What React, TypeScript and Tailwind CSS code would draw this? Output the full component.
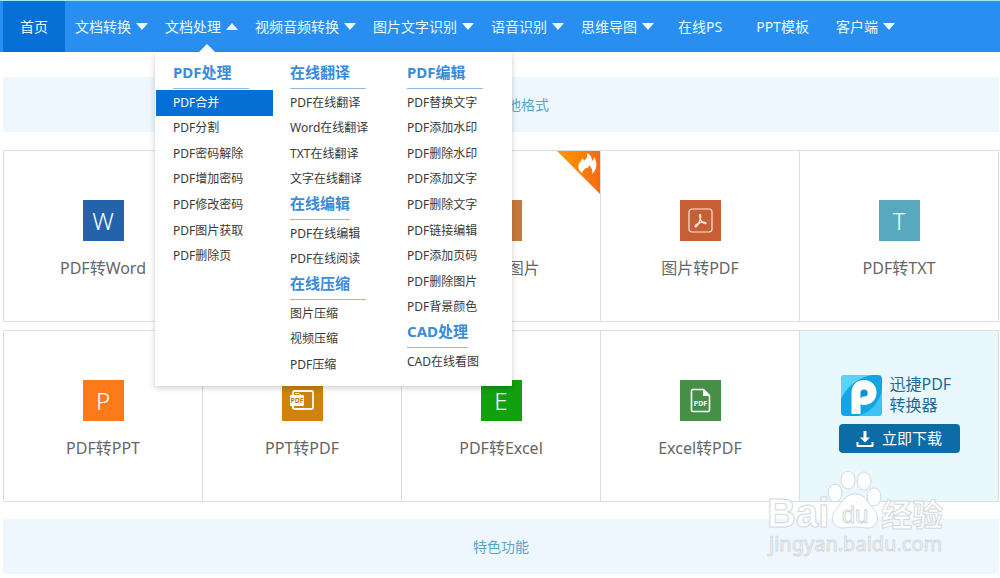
import React from "react";
import clsx from "clsx";

const menuColumns = [
  [
    {
      title: "PDF处理",
      line: "w-[76px]",
      height: "h-[179px]",
      items: ["PDF合并", "PDF分割", "PDF密码解除", "PDF增加密码", "PDF修改密码", "PDF图片获取", "PDF删除页"],
    },
  ],
  [
    {
      title: "在线翻译",
      line: "w-[76px]",
      height: "h-[102px]",
      items: ["PDF在线翻译", "Word在线翻译", "TXT在线翻译", "文字在线翻译"],
    },
    {
      title: "在线编辑",
      line: "w-fit",
      height: "h-[51px]",
      items: ["PDF在线编辑", "PDF在线阅读"],
    },
    {
      title: "在线压缩",
      line: "w-[76px]",
      height: "h-[77px]",
      items: ["图片压缩", "视频压缩", "PDF压缩"],
    },
  ],
  [
    {
      title: "PDF编辑",
      line: "w-[76px]",
      height: "h-[230px]",
      items: [
        "PDF替换文字",
        "PDF添加水印",
        "PDF删除水印",
        "PDF添加文字",
        "PDF删除文字",
        "PDF链接编辑",
        "PDF添加页码",
        "PDF删除图片",
        "PDF背景颜色",
      ],
    },
    {
      title: "CAD处理",
      line: "w-fit",
      height: "h-[26px]",
      items: ["CAD在线看图"],
    },
  ],
];

function Caret({ up = false }: { up?: boolean }) {
  return (
    <svg width="12" height="7" viewBox="0 0 12 7" className={clsx("shrink-0", up && "rotate-180")} aria-hidden="true">
      <path d="M0 0h12L6 7z" fill="#f2fcff" />
    </svg>
  );
}

function NavItem({ label, open = false, children }: { label: string; open?: boolean; children?: React.ReactNode }) {
  return (
    <li className="relative">
      <button
        type="button"
        aria-expanded={open}
        className="flex h-[51px] cursor-pointer items-center gap-[5px] pr-[7px] pl-[10px] whitespace-nowrap"
      >
        {label}
        <Caret up={open} />
      </button>
      {children}
    </li>
  );
}

function NavLink({ label }: { label: string }) {
  return (
    <li>
      <a href="#" className="flex h-[51px] items-center px-[17px] whitespace-nowrap">
        {label}
      </a>
    </li>
  );
}

function MegaMenu() {
  return (
    <div className="absolute top-full left-0 z-10 text-[#3a3a3a]">
      <svg width="16" height="8" viewBox="0 0 16 8" className="absolute -top-2 left-11" aria-hidden="true">
        <path d="M8 0l8 8H0z" fill="#fff" />
      </svg>
      <div className="flex w-[357px] bg-white pt-[9px] pb-2 pl-px text-[12px] shadow-[0_2px_6px_rgba(0,0,0,0.2)]">
        {menuColumns.map((sections, col) => (
          <div key={col} className="w-[117px]">
            {sections.map((section) => (
              <div key={section.title}>
                <h3
                  className={clsx(
                    "mb-px ml-[17px] h-7 border-b border-[#8fbbe0] text-[15px] leading-[22px] font-bold text-[#3a8bd8]",
                    section.line
                  )}
                >
                  {section.title}
                </h3>
                <ul className={clsx("grid auto-rows-fr", section.height)}>
                  {section.items.map((item) => (
                    <li key={item} className="min-h-0">
                      <a
                        href="#"
                        className={clsx(
                          "flex h-full items-center pl-[17px] leading-4",
                          item === "PDF合并" && "bg-[#046fd5] text-white"
                        )}
                      >
                        {item}
                      </a>
                    </li>
                  ))}
                </ul>
              </div>
            ))}
          </div>
        ))}
      </div>
    </div>
  );
}

function Band({ children }: { children: React.ReactNode }) {
  return (
    <h2 className="flex h-[55px] items-center justify-center bg-[#eff7fe] text-[14px] text-[#5aa5c8]">{children}</h2>
  );
}

function Card({ label, color, children, hot }: { label: string; color: string; children: React.ReactNode; hot?: boolean }) {
  return (
    <a
      href="#"
      className="relative flex h-[170px] flex-col items-center gap-[15px] border-r border-[#dcdfe0] pt-[49px] text-[16px] leading-6 text-[#666]"
    >
      <span className={clsx("flex size-[41px] items-center justify-center text-[24px] font-light text-white", color)}>
        {children}
      </span>
      {label}
      {hot && <HotCorner />}
    </a>
  );
}

function HotCorner() {
  return (
    <svg width="43" height="43" viewBox="0 0 43 43" className="absolute top-0 right-0" aria-hidden="true">
      <defs>
        <linearGradient id="hot" x1="0" y1="0" x2="1" y2="0">
          <stop offset="0" stopColor="#ff9c00" />
          <stop offset="1" stopColor="#f56a12" />
        </linearGradient>
      </defs>
      <path d="M0 0h43v43z" fill="url(#hot)" />
      <path
        d="M25 22c-4-3-5-7-2-11 1-1 2-2 2-4 1 1 2 2 2 3 2-2 4-4 3-8 4 2 5 5 5 8 1-1 2-2 2-4 4 6 3 13-2 17 1-3 0-6-3-9 0 2-1 3-2 3-2 0-4 2-5 5z"
        fill="#fff"
      />
    </svg>
  );
}

function AcrobatIcon() {
  return (
    <svg width="25" height="25" viewBox="0 0 25 25" fill="none" stroke="#fbe6dc" aria-hidden="true">
      <rect x="1" y="1" width="23" height="23" rx="3" strokeWidth="1.2" />
      <path
        d="M12 6.500c.8 0 .8 2.500.3 4.500-.8 3-3.300 8-4.800 8-1.500-.8 1.500-3.500 4.500-4.300 2.500-.8 6-.8 6 .5s-4-.4-5.300-3.200C11.800 10 11.200 6.500 12 6.500z"
        strokeWidth="1.400"
      />
    </svg>
  );
}

function PptPdfIcon() {
  return (
    <svg width="25" height="23" viewBox="0 0 25 23" aria-hidden="true">
      <rect x="3" y="2" width="20" height="18" rx="1.500" fill="none" stroke="#fff" strokeWidth="1.800" />
      <path d="M5 4.500h4l1.500 1.500" fill="none" stroke="#fff" />
      <rect x="0" y="6" width="14" height="11" rx="1" fill="#fff" />
      <text x="7" y="14" fontSize="7" fontWeight="600" textAnchor="middle" fill="#b06c05">
        PDF
      </text>
    </svg>
  );
}

function PdfFileIcon() {
  return (
    <svg width="21" height="25" viewBox="0 0 21 25" aria-hidden="true">
      <path
        d="M3 1.500h10.500l6 6V22a1.500 1.500 0 0 1-1.500 1.500H3A1.500 1.500 0 0 1 1.500 22V3A1.500 1.500 0 0 1 3 1.500z"
        fill="none"
        stroke="#fff"
        strokeWidth="1.600"
        strokeLinejoin="round"
      />
      <path d="M13 1.500l6.500 6.500H13z" fill="#fff" />
      <text x="10.500" y="18" fontSize="7" fontWeight="700" textAnchor="middle" fill="#fff">
        PDF
      </text>
    </svg>
  );
}

function AppLogo() {
  return (
    <svg width="41" height="41" viewBox="0 0 41 41" aria-hidden="true">
      <rect width="41" height="41" rx="4" fill="#12a4e4" />
      <path d="M4 0h27C17 3 7 10 0 24V4a4 4 0 0 1 4-4z" fill="#5cd3f8" />
      <path d="M41 15v22a4 4 0 0 1-4 4H17c13-4 21-13 24-26z" fill="#3dc4f3" />
      <path
        d="M10.500 39V17.500C10.500 9.500 16 5 23 5s12.500 5 12.500 12.500S30 30 23 30c-1.500 0-2.500-.3-3.500-.8V39z"
        fill="#fff"
      />
      <path d="M19.500 23.500V18a3.600 3.600 0 1 1 3.600 3.600c-1.600 0-2.600.5-3.600 1.900z" fill="#0b90d0" />
    </svg>
  );
}

function DownloadIcon() {
  return (
    <svg width="18" height="18" viewBox="0 0 18 18" aria-hidden="true">
      <path d="M7.500 1h3v6.500h3.500L9 12.500 4 7.500h3.500z" fill="#fff" />
      <path d="M1.500 12v4h15v-4" fill="none" stroke="#fff" strokeWidth="2" strokeLinejoin="round" />
    </svg>
  );
}

function DownloadCard() {
  return (
    <div className="flex h-[170px] flex-col items-center gap-2 border-r border-[#dcdfe0] bg-[#e8f8fd] pt-[43px]">
      <div className="flex w-[121px] items-center gap-2 pl-0.5 text-[16px] leading-[21px] whitespace-nowrap text-[#1d6a96]">
        <AppLogo />
        <p>
          迅捷PDF
          <br />
          转换器
        </p>
      </div>
      <button
        type="button"
        className="flex h-[29px] w-[121px] cursor-pointer items-center justify-center gap-2 rounded bg-[#0c6ca6] text-[15px] text-white"
      >
        <DownloadIcon />
        立即下载
      </button>
    </div>
  );
}

function Watermark() {
  return (
    <svg
      width="184"
      height="92"
      viewBox="0 0 184 92"
      className="pointer-events-none absolute right-[50px] bottom-4"
      fill="#fff"
      fillOpacity="0.85"
      stroke="#d3d9dc"
      strokeWidth="1"
      aria-hidden="true"
    >
      <text x="1" y="57" fontSize="40" fontWeight="700" fontFamily="Liberation Sans, sans-serif">
        Bai
      </text>
      <ellipse cx="69" cy="23" rx="7" ry="9" />
      <ellipse cx="82" cy="10" rx="7" ry="9" />
      <ellipse cx="98" cy="11" rx="7" ry="9" />
      <ellipse cx="108" cy="27" rx="7" ry="9" />
      <path d="M89 24c10 0 12 8 18 14 8 8 5 20-5 20-5 0-8-1-13-1s-8 1-13 1c-10 0-13-12-5-20 6-6 8-14 18-14z" />
      <text x="89" y="53" fontSize="24" textAnchor="middle" fontFamily="Liberation Sans, sans-serif">
        du
      </text>
      <text x="115" y="56" fontSize="31" fontWeight="700">
        经验
      </text>
      <text x="3" y="81" fontSize="20" fontFamily="Noto Sans, sans-serif">
        jingyan.baidu.com
      </text>
    </svg>
  );
}

function App() {
  return (
    <div className="relative bg-white font-['Noto_Sans','Noto_Sans_CJK_SC',sans-serif]">
      <header className="border-t border-[#a5e6f5] bg-[#288ff0]">
        <nav className="pl-[3px] text-[14px] text-[#e9faff]">
          <ul className="flex">
            <li>
              <a href="#" className="flex h-[51px] w-[62px] items-center justify-center bg-[#0670d6]">
                首页
              </a>
            </li>
            <NavItem label="文档转换" />
            <NavItem label="文档处理" open>
              <MegaMenu />
            </NavItem>
            <NavItem label="视频音频转换" />
            <NavItem label="图片文字识别" />
            <NavItem label="语音识别" />
            <NavItem label="思维导图" />
            <NavLink label="在线PS" />
            <NavLink label="PPT模板" />
            <NavItem label="客户端" />
          </ul>
        </nav>
      </header>

      <main className="pt-[25px] pr-px pb-1 pl-[3px]">
        <Band>PDF转其他格式</Band>
        <div className="mt-[18px] grid grid-cols-5 border-y border-l border-[#dcdfe0]">
          <Card label="PDF转Word" color="bg-[#2463ab]">
            W
          </Card>
          <Card label="Word转PDF" color="bg-[#3a7fc4]">
            <PdfFileIcon />
          </Card>
          <Card label="PDF转图片" color="bg-[#c4793a]" hot>
            J
          </Card>
          <Card label="图片转PDF" color="bg-[#c65f35]">
            <AcrobatIcon />
          </Card>
          <Card label="PDF转TXT" color="bg-[#58a9bf]">
            T
          </Card>
        </div>
        <div className="mt-2 grid grid-cols-5 border-y border-l border-[#dcdfe0]">
          <Card label="PDF转PPT" color="bg-[#fd7a1a]">
            P
          </Card>
          <Card label="PPT转PDF" color="bg-[#d0830c]">
            <PptPdfIcon />
          </Card>
          <Card label="PDF转Excel" color="bg-[#12a00f]">
            E
          </Card>
          <Card label="Excel转PDF" color="bg-[#459045]">
            <PdfFileIcon />
          </Card>
          <DownloadCard />
        </div>
        <div className="mt-[17px]">
          <Band>特色功能</Band>
        </div>
      </main>
      <Watermark />
    </div>
  );
}

export default App;
